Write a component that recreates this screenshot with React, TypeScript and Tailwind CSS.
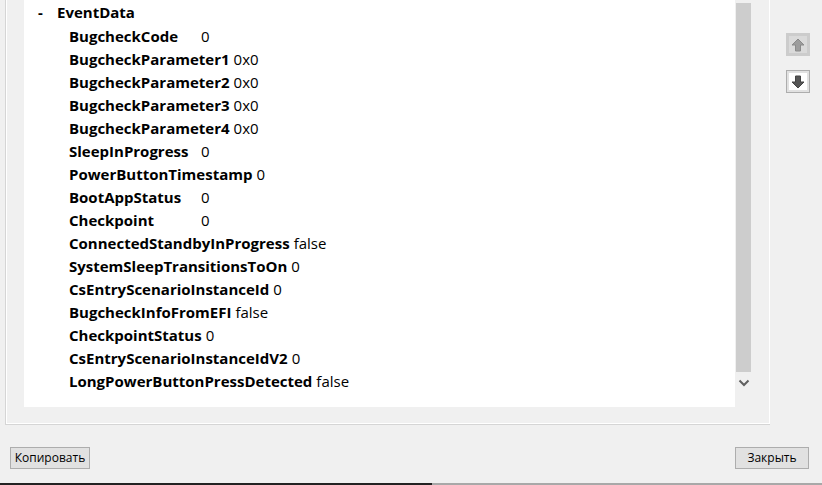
import React from "react";

const rows: [string, string][] = [
  ["BugcheckCode", "0"],
  ["BugcheckParameter1", "0x0"],
  ["BugcheckParameter2", "0x0"],
  ["BugcheckParameter3", "0x0"],
  ["BugcheckParameter4", "0x0"],
  ["SleepInProgress", "0"],
  ["PowerButtonTimestamp", "0"],
  ["BootAppStatus", "0"],
  ["Checkpoint", "0"],
  ["ConnectedStandbyInProgress", "false"],
  ["SystemSleepTransitionsToOn", "0"],
  ["CsEntryScenarioInstanceId", "0"],
  ["BugcheckInfoFromEFI", "false"],
  ["CheckpointStatus", "0"],
  ["CsEntryScenarioInstanceIdV2", "0"],
  ["LongPowerButtonPressDetected", "false"],
];

const font = { fontFamily: '"Open Sans", "Noto Sans", sans-serif' };

export default function App() {
  return (
    <div className="w-[822px] h-[485px] bg-[#f0f0f0] overflow-hidden flex flex-col" style={font}>
      <div className="flex h-[425px]">
        <div className="ml-[5px] w-[765px] h-[425px] border-l border-r border-b border-[#d5d5d5]">
          <div className="h-full border-l border-r border-b border-white -mr-px flex pl-[17px]">
            <div className="w-[711px] h-[407px] bg-white pl-[14px] text-black">
              <div className="h-[24px] flex items-center text-[15px] font-bold leading-none">
                <span className="w-[19px]">-</span>
                <span>EventData</span>
              </div>
              <div className="pl-[31px]">
                {rows.map(([k, v]) => (
                  <div key={k} className="h-[23px] pt-[1px] flex items-center text-[15px] leading-none">
                    <span className="font-bold min-w-[128px]">{k}</span>
                    <span className="ml-[4px]">{v}</span>
                  </div>
                ))}
              </div>
            </div>
            <div className="w-[17px] h-[407px] bg-[#f0f0f0] flex flex-col items-center">
              <div className="mt-[3px] w-[15px] h-[369px] bg-[#cdcdcd]" />
              <svg width="12" height="8" viewBox="0 0 12 8" className="mt-[7px]">
                <path d="M1.5 1.5 L6 6 L10.5 1.5" stroke="#606060" strokeWidth="2" fill="none" />
              </svg>
            </div>
          </div>
        </div>
        <div className="flex flex-col ml-[16px] pt-[33px] gap-[14px]">
          <div className="w-[24px] h-[23px] border border-[#cccccc] bg-[#cccccc] p-[2px]">
            <div className="w-full h-full bg-[#dadada] flex items-center justify-center">
              <svg width="14" height="14" viewBox="0 0 14 14">
                <path d="M7 1 L13 7 L9.5 7 L9.5 13 L4.5 13 L4.5 7 L1 7 Z" fill="#9c9c9c" stroke="#8a8a8a" strokeWidth="1" />
              </svg>
            </div>
          </div>
          <div className="w-[24px] h-[23px] border border-[#adadad] bg-[#e1e1e1] p-[2px]">
            <div className="w-full h-full bg-white flex items-center justify-center">
              <svg width="14" height="14" viewBox="0 0 14 14">
                <path d="M7 13 L13 7 L9.5 7 L9.5 1 L4.5 1 L4.5 7 L1 7 Z" fill="#555555" stroke="#444444" strokeWidth="1" />
              </svg>
            </div>
          </div>
        </div>
      </div>
      <div className="flex justify-between mt-[22px] px-[10px] pr-[13px]">
        <button className="w-[80px] h-[22px] border border-[#adadad] bg-[#e1e1e1] text-[12px] text-black leading-none">
          Копировать
        </button>
        <button className="w-[74px] h-[22px] border border-[#adadad] bg-[#e1e1e1] text-[12px] text-black leading-none">
          Закрыть
        </button>
      </div>
      <div className="mt-[14px] h-[3px] flex">
        <div className="w-[432px] bg-[#222222]" />
        <div className="flex-1 bg-[#a8a8a8]" />
      </div>
    </div>
  );
}
